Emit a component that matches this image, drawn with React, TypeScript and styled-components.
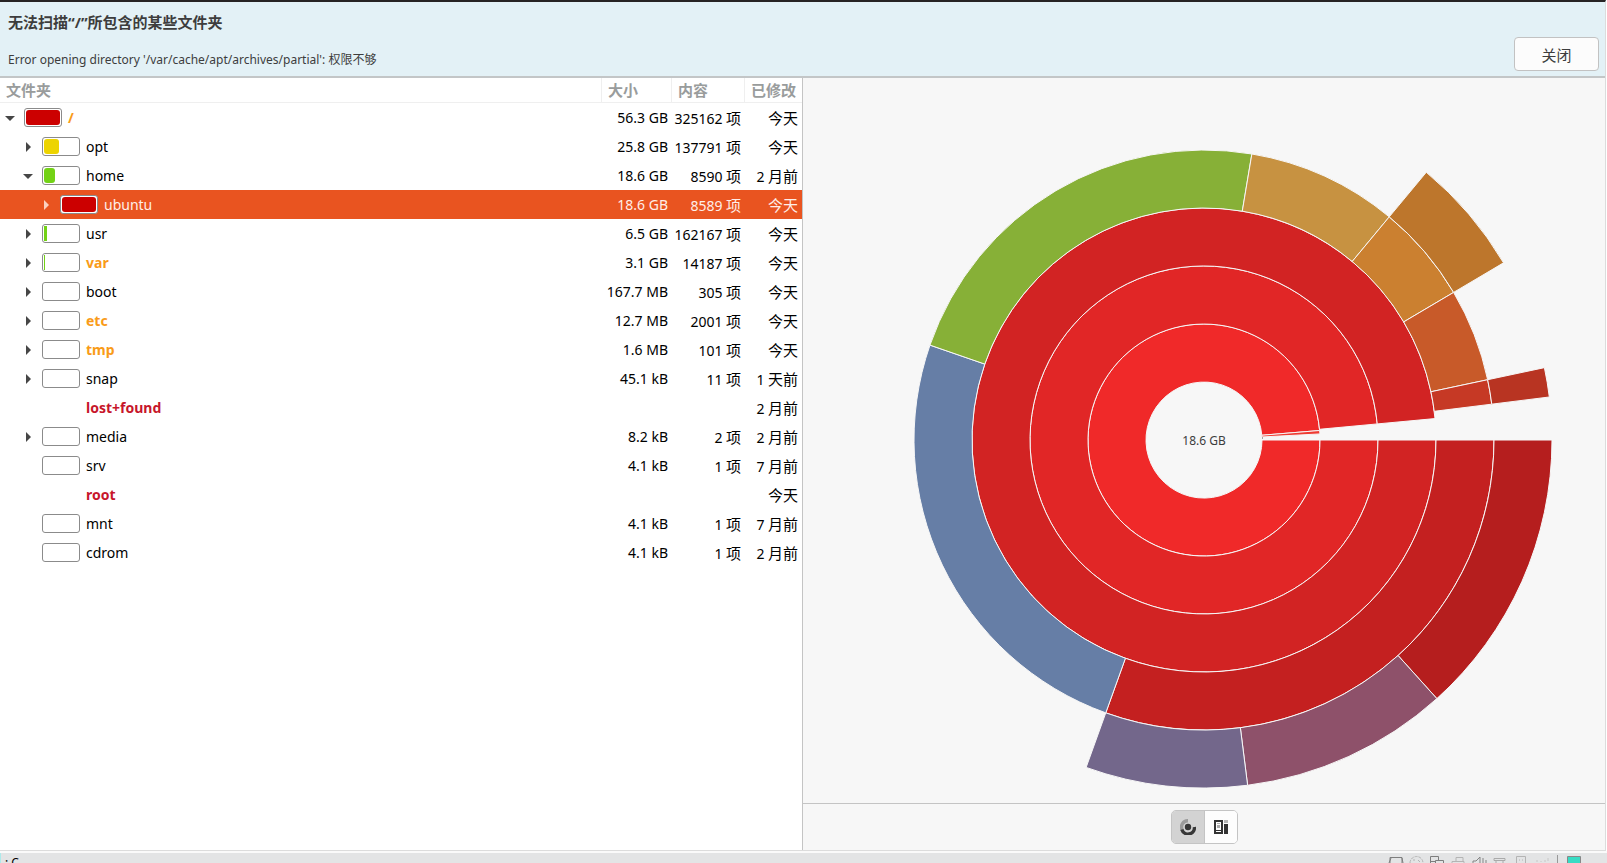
import React from "react";
import styled, { createGlobalStyle, css } from "styled-components";

const GlobalStyle = createGlobalStyle`
  * { box-sizing: border-box; }
  html, body { margin: 0; height: 100%; overflow: hidden; }
  body {
    font-family: "Noto Sans", "Noto Sans CJK SC", sans-serif;
    font-size: 14px;
    color: #000;
    background: #fff;
  }
  #root { height: 100%; }
  button { font: inherit; padding: 0; cursor: default; }
`;

const Screen = styled.div`
  display: flex;
  flex-direction: column;
  height: 100vh;
`;

const AppWindow = styled.main`
  flex: 1;
  min-height: 0;
  display: flex;
  flex-direction: column;
  margin-right: 1px;
  border-top: 2px solid #262324;
  border-right: 1px solid #dcdcdc;
  border-bottom: 1px solid #dcdcdc;
`;

const InfoBar = styled.section`
  display: flex;
  align-items: flex-end;
  justify-content: space-between;
  height: 76px;
  padding: 0 6px 5px 8px;
  background: #e3f1f6;
  border-bottom: 2px solid #c3c6c7;
  color: #3d3d3d;
`;

const Message = styled.div`
  align-self: flex-start;
  padding-top: 8px;
`;

const Title = styled.h1`
  margin: 0 0 17px;
  font-family: "Noto Sans CJK SC", sans-serif;
  font-size: 15px;
  line-height: 24px;
  font-weight: 700;
`;

const Quote = styled.span`
  font-family: "Noto Sans", sans-serif;
`;

const Detail = styled.p`
  margin: 0;
  font-size: 12px;
  line-height: 18px;
`;

const CloseButton = styled.button`
  width: 85px;
  height: 34px;
  border: 1px solid #c2c2c2;
  border-radius: 4px;
  background: #fcfcfc;
  color: #3d3d3d;
  font-size: 15px;
`;

const Panes = styled.div`
  flex: 1;
  min-height: 0;
  display: flex;
`;

const TreePane = styled.section`
  flex: 1;
  min-width: 0;
  background: #fff;
  border-right: 1px solid #c4c4c4;
`;

const Tree = styled.table`
  width: 100%;
  table-layout: fixed;
  border-collapse: separate;
  border-spacing: 0;
`;

const Col = styled.col<{ $w?: number }>`
  ${(p) => p.$w && css`width: ${p.$w}px;`}
`;

const Head = styled.th`
  height: 25px;
  padding: 0 0 0 6px;
  border-bottom: 1px solid #efefef;
  border-left: 1px solid #efefef;
  text-align: left;
  white-space: nowrap;
  font-size: 15px;
  line-height: 22px;
  font-weight: 700;
  color: #999c9c;
  &:first-child { border-left: 0; }
`;

const Row = styled.tr<{ $selected?: boolean }>`
  height: 29px;
  ${(p) => p.$selected && css`
    background: #e95420;
    color: #ffeee8;
  `}
`;

const Cell = styled.td<{ $cjk?: boolean }>`
  padding: ${(p) => (p.$cjk ? 2 : 0)}px 3px 0 0;
  text-align: right;
  white-space: nowrap;
  line-height: ${(p) => (p.$cjk ? 26 : 28)}px;
  &:last-child { padding-right: 4px; }
`;

const Cjk = styled.span`
  font-family: "Noto Sans CJK SC", sans-serif;
  font-size: 15px;
`;

const NameCell = styled.td`
  padding: 0;
`;

const Name = styled.div<{ $level: number }>`
  display: flex;
  align-items: center;
  height: 29px;
  padding-left: ${(p) => p.$level * 18}px;
`;

const Expander = styled.button<{ $light?: boolean }>`
  display: flex;
  align-items: center;
  justify-content: center;
  width: 20px;
  height: 20px;
  margin-right: 4px;
  border: 0;
  background: none;
  color: ${(p) => (p.$light ? "#fbd0bf" : "#464646")};
`;

const ExpanderGap = styled.span`
  width: 24px;
`;

const Gauge = styled.span<{ $empty?: boolean }>`
  width: 38px;
  height: 19px;
  margin: 0 6px 1px 0;
  padding: 1px;
  border: 1px solid #8b8b8b;
  border-radius: 3px;
  background: #fff;
  ${(p) => p.$empty && css`visibility: hidden;`}
`;

const GaugeFill = styled.span<{ $w: number; $color: string }>`
  display: block;
  width: ${(p) => p.$w}px;
  height: 15px;
  border-radius: ${(p) => (p.$w > 5 ? 3 : 0)}px;
  background: ${(p) => p.$color};
`;

type Tone = "normal" | "warn" | "error";

const Label = styled.span<{ $tone: Tone }>`
  line-height: 28px;
  ${(p) => p.$tone !== "normal" && css`
    font-weight: 700;
    color: ${p.$tone === "warn" ? "#f99b18" : "#c7162b"};
  `}
`;

const ChartPane = styled.section`
  flex: 1;
  min-width: 0;
  display: flex;
  flex-direction: column;
  background: #f7f7f7;
`;

const ChartArea = styled.div`
  flex: 1;
  min-height: 0;
  svg { display: block; width: 100%; height: 100%; }
`;

const ChartFooter = styled.footer`
  display: flex;
  justify-content: center;
  align-items: center;
  height: 47px;
  border-top: 1px solid #c4c4c4;
`;

const Switcher = styled.div`
  display: flex;
  height: 34px;
  border: 1px solid #c4c4c4;
  border-radius: 5px;
  overflow: hidden;
`;

const SwitchButton = styled.button<{ $active?: boolean }>`
  display: flex;
  align-items: center;
  justify-content: center;
  width: 32px;
  border: 0;
  background: ${(p) => (p.$active ? "#d3d3d3" : "#fdfdfd")};
  & + & { width: 33px; border-left: 1px solid #c4c4c4; }
`;

const Desktop = styled.div`
  display: flex;
  justify-content: space-between;
  height: 12px;
  padding-right: 26px;
  border-top: 2px solid #fafafa;
  background: #e3e4e5;
  overflow: hidden;
`;

const StatusText = styled.span`
  padding-left: 4px;
  border-left: 1px solid #aeeaea;
  font-size: 12px;
  line-height: 20px;
`;

interface Folder {
  name: string;
  level: number;
  tone?: Tone;
  arrow?: "open" | "closed";
  fill?: number;
  color?: string;
  size?: string;
  items?: string;
  when: string;
  selected?: boolean;
}

const RED = "#cc0000";
const YELLOW = "#edd400";
const GREEN = "#73d216";

const folders: Folder[] = [
  { name: "/", level: 0, tone: "warn", arrow: "open", fill: 34, color: RED, size: "56.3 GB", items: "325162", when: "今天" },
  { name: "opt", level: 1, arrow: "closed", fill: 15, color: YELLOW, size: "25.8 GB", items: "137791", when: "今天" },
  { name: "home", level: 1, arrow: "open", fill: 11, color: GREEN, size: "18.6 GB", items: "8590", when: "2 月前" },
  { name: "ubuntu", level: 2, arrow: "closed", fill: 34, color: RED, size: "18.6 GB", items: "8589", when: "今天", selected: true },
  { name: "usr", level: 1, arrow: "closed", fill: 3, color: GREEN, size: "6.5 GB", items: "162167", when: "今天" },
  { name: "var", level: 1, tone: "warn", arrow: "closed", fill: 1, color: GREEN, size: "3.1 GB", items: "14187", when: "今天" },
  { name: "boot", level: 1, arrow: "closed", fill: 0, size: "167.7 MB", items: "305", when: "今天" },
  { name: "etc", level: 1, tone: "warn", arrow: "closed", fill: 0, size: "12.7 MB", items: "2001", when: "今天" },
  { name: "tmp", level: 1, tone: "warn", arrow: "closed", fill: 0, size: "1.6 MB", items: "101", when: "今天" },
  { name: "snap", level: 1, arrow: "closed", fill: 0, size: "45.1 kB", items: "11", when: "1 天前" },
  { name: "lost+found", level: 1, tone: "error", when: "2 月前" },
  { name: "media", level: 1, arrow: "closed", fill: 0, size: "8.2 kB", items: "2", when: "2 月前" },
  { name: "srv", level: 1, fill: 0, size: "4.1 kB", items: "1", when: "7 月前" },
  { name: "root", level: 1, tone: "error", when: "今天" },
  { name: "mnt", level: 1, fill: 0, size: "4.1 kB", items: "1", when: "7 月前" },
  { name: "cdrom", level: 1, fill: 0, size: "4.1 kB", items: "1", when: "2 月前" },
];

function Arrow({ open }: { open: boolean }) {
  return (
    <svg width="10" height="10" viewBox="0 0 10 10" aria-hidden="true">
      <path d={open ? "M0 3h10L5 8z" : "M3 0v10l5-5z"} fill="currentColor" />
    </svg>
  );
}

function FolderRow({ f }: { f: Folder }) {
  return (
    <Row $selected={f.selected}>
      <NameCell>
        <Name $level={f.level}>
          {f.arrow ? (
            <Expander $light={f.selected} aria-label={f.name} aria-expanded={f.arrow === "open"}>
              <Arrow open={f.arrow === "open"} />
            </Expander>
          ) : (
            <ExpanderGap />
          )}
          <Gauge $empty={f.fill === undefined}>
            {f.fill ? <GaugeFill $w={f.fill} $color={f.color ?? GREEN} /> : null}
          </Gauge>
          <Label $tone={f.tone ?? "normal"}>{f.name}</Label>
        </Name>
      </NameCell>
      <Cell>{f.size}</Cell>
      <Cell $cjk>{f.items && <>{f.items}<Cjk> 项</Cjk></>}</Cell>
      <Cell $cjk><When text={f.when} /></Cell>
    </Row>
  );
}

function When({ text }: { text: string }) {
  const parts = text.split(" ");
  return parts.length > 1 ? <>{parts[0]}<Cjk> {parts[1]}</Cjk></> : <Cjk>{text}</Cjk>;
}

/* Sunburst: angles in degrees clockwise from the right, ring 1 is the innermost. */
const STEP = 58;
const arcs: { ring: number; from: number; to: number; color: string }[] = [
  { ring: 1, from: 0, to: 355.3, color: "#f02929" },
  { ring: 1, from: 355.3, to: 357, color: "#ef3b32" },
  { ring: 2, from: 0, to: 354.7, color: "#e12626" },
  { ring: 3, from: 0, to: 354.7, color: "#d22323" },
  { ring: 4, from: 0, to: 109.8, color: "#c42020" },
  { ring: 4, from: 109.8, to: 199.1, color: "#667ea6" },
  { ring: 4, from: 199.1, to: 279.5, color: "#87b037" },
  { ring: 4, from: 279.5, to: 309.7, color: "#c79241" },
  { ring: 4, from: 309.7, to: 329.4, color: "#cb8030" },
  { ring: 4, from: 329.4, to: 348, color: "#c85a29" },
  { ring: 4, from: 348, to: 352.9, color: "#c63925" },
  { ring: 5, from: 0, to: 48, color: "#b51e1e" },
  { ring: 5, from: 48, to: 82.8, color: "#8e516a" },
  { ring: 5, from: 82.8, to: 109.8, color: "#73678b" },
  { ring: 5, from: 309.7, to: 329.4, color: "#bd762c" },
  { ring: 5, from: 348, to: 352.9, color: "#b83422" },
];

function sector(ring: number, from: number, to: number) {
  const r0 = ring * STEP;
  const r1 = r0 + STEP;
  const pt = (r: number, a: number) => {
    const t = (a * Math.PI) / 180;
    return `${(r * Math.cos(t)).toFixed(2)} ${(r * Math.sin(t)).toFixed(2)}`;
  };
  const big = to - from > 180 ? 1 : 0;
  return `M${pt(r0, from)}L${pt(r1, from)}A${r1} ${r1} 0 ${big} 1 ${pt(r1, to)}L${pt(r0, to)}A${r0} ${r0} 0 ${big} 0 ${pt(r0, from)}Z`;
}

function Sunburst() {
  return (
    <svg viewBox="-401 -362 802 725" role="img" aria-label="18.6 GB">
      {arcs.map((a) => (
        <path
          key={`${a.ring}-${a.from}`}
          d={sector(a.ring, a.from, a.to)}
          fill={a.color}
          stroke="#f7f7f7"
          strokeWidth="1"
        />
      ))}
      <path d="M58-2h1" stroke="#555" />
      <text x="0" y="5" textAnchor="middle" fontSize="12" fill="#3d3d3d">18.6 GB</text>
    </svg>
  );
}

function RingsIcon() {
  return (
    <svg width="16" height="16" viewBox="0 0 16 16" aria-hidden="true">
      <path d="M2.2 10.8A6.3 6.3 0 0 1 8 1.700" fill="none" stroke="#9b9b9b" strokeWidth="3.4" />
      <path d="M1.900 10.500A6.400 6.400 0 0 0 14.400 8" fill="none" stroke="#373737" strokeWidth="3.4" />
      <circle cx="8" cy="8" r="3.2" fill="#373737" />
    </svg>
  );
}

function TreemapIcon() {
  return (
    <svg width="16" height="16" viewBox="0 0 16 16" aria-hidden="true">
      <path d="M1 1h9v14H1zM3 3v8h5V3zM3 12v1h5v-1z" fill="#333" fillRule="evenodd" />
      <path d="M4 4h3v1H4zM4 6h3v3H4z" fill="#aaa" />
      <path d="M11 1h4v3h-4z" fill="#b5b5b5" />
      <path d="M11 5h4v10h-4z" fill="#333" />
    </svg>
  );
}

function TrayIcons() {
  return (
    <svg width="196" height="10" viewBox="0 0 196 10" fill="none" aria-hidden="true">
      <path d="M5 10V4.500h12V10M4 10l2-5M17 5l1 5" stroke="#7e7e7e" />
      <path d="M25 10a6.500 6.500 0 0 1 13 0M29 6v2M33 7l2 2" stroke="#b4b4b4" strokeDasharray="3 1" />
      <path d="M45.500 10V3.500h8V7M50.500 10V7.500h8V10M46 8.500h4" stroke="#7e7e7e" />
      <path d="M71 8V4.500h7V8M67 10V8.500h12V10" stroke="#b4b4b4" />
      <path d="M88 10V8h3l4-4v6M98 5v5M101 7v3" stroke="#858585" />
      <path d="M109 5.500h11v2h-11zM111 10V8M118 10V8" stroke="#aaa" />
      <path d="M131.500 10V3.500h9V10M134 7h1M137 7h1" stroke="#b4b4b4" />
      <path d="M152 9v-2M156 9v-1M160 7v2M163 5v3" stroke="#c8c8c8" />
      <path d="M172.500 2v8" stroke="#999" />
      <path d="M182.500 10V3.500h13V10" fill="#38dcc4" stroke="#888" />
    </svg>
  );
}

export default function App() {
  return (
    <Screen>
      <GlobalStyle />
      <AppWindow>
        <InfoBar>
          <Message>
            <Title>无法扫描<Quote>“/”</Quote>所包含的某些文件夹</Title>
            <Detail>Error opening directory '/var/cache/apt/archives/partial': 权限不够</Detail>
          </Message>
          <CloseButton>关闭</CloseButton>
        </InfoBar>
        <Panes>
          <TreePane>
            <Tree>
              <colgroup>
                <Col />
                <Col $w={70} />
                <Col $w={73} />
                <Col $w={58} />
              </colgroup>
              <thead>
                <tr>
                  <Head>文件夹</Head>
                  <Head>大小</Head>
                  <Head>内容</Head>
                  <Head>已修改</Head>
                </tr>
              </thead>
              <tbody>
                {folders.map((f) => <FolderRow key={f.name} f={f} />)}
              </tbody>
            </Tree>
          </TreePane>
          <ChartPane>
            <ChartArea><Sunburst /></ChartArea>
            <ChartFooter>
              <Switcher>
                <SwitchButton $active aria-label="环形图"><RingsIcon /></SwitchButton>
                <SwitchButton aria-label="树形图"><TreemapIcon /></SwitchButton>
              </Switcher>
            </ChartFooter>
          </ChartPane>
        </Panes>
      </AppWindow>
      <Desktop>
        <StatusText>: C</StatusText>
        <TrayIcons />
      </Desktop>
    </Screen>
  );
}
